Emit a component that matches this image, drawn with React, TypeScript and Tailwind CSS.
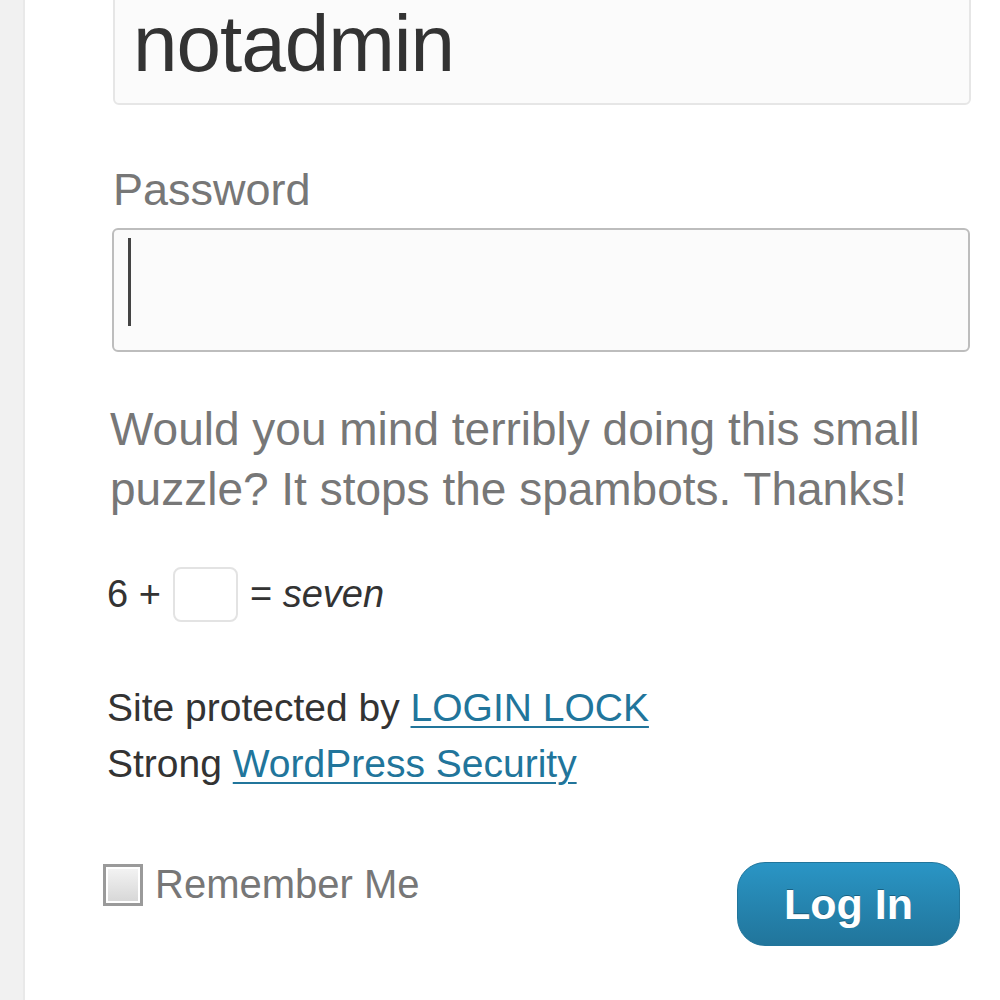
import React from 'react';

const font = { fontFamily: '"Liberation Sans", Arial, sans-serif' };

const App: React.FC = () => {
  return (
    <div className="flex w-[1000px] h-[1000px] overflow-hidden bg-white" style={font}>
      {/* left page edge */}
      <div className="w-[25px] h-full shrink-0 bg-[#f1f1f1] border-r-2 border-[#e9e9e9]" />

      <div className="flex-1 flex flex-col">
        {/* username field, top cut off */}
        <div className="ml-[88px] -mt-[20px] w-[858px] h-[125px] shrink-0 rounded-[6px] border-2 border-[#e6e6e6] bg-[#fbfbfb] pl-[18px] pt-[22px]">
          <span className="block text-[80px] leading-[80px] tracking-[-1px] text-[#333]">notadmin</span>
        </div>

        <label className="ml-[88px] mt-[62px] block text-[45px] leading-[45px] text-[#777]">Password</label>
        <div className="ml-[87px] mt-[16px] w-[858px] h-[124px] shrink-0 rounded-[6px] border-2 border-[#bdbdbd] bg-[#fbfbfb] pl-[14px] pt-[8px]">
          <div className="w-[3px] h-[88px] bg-[#444]" />
        </div>

        <p className="ml-[85px] mt-[47px] text-[46px] leading-[60px] text-[#777] whitespace-nowrap">
          Would you mind terribly doing this small
          <br />
          puzzle? It stops the spambots. Thanks!
        </p>

        <div className="ml-[82px] mt-[48px] flex items-center h-[55px] text-[38px] text-[#333] whitespace-nowrap">
          <span>6 +</span>
          <div className="ml-[12px] mr-[12px] w-[65px] h-[55px] rounded-[8px] border-2 border-[#e3e3e3] bg-white" />
          <span>= <em>seven</em></span>
        </div>

        <div className="ml-[82px] mt-[58px] text-[39px] leading-[56px] text-[#333] whitespace-nowrap">
          <div>
            Site protected by <a href="#" className="text-[#21759b] underline decoration-2 underline-offset-[5px]">LOGIN LOCK</a>
          </div>
          <div>
            Strong <a href="#" className="text-[#21759b] underline decoration-2 underline-offset-[5px]">WordPress Security</a>
          </div>
        </div>

        <div className="ml-[78px] mr-[40px] mt-[71px] flex items-start">
          <div className="flex items-start gap-[12px] pt-[1px]">
            <div className="w-[40px] h-[42px] border-[3px] border-[#9a9a9a] bg-gradient-to-b from-[#f4f4f4] to-[#d6d6d6] shadow-[inset_0_0_0_2px_#ffffff]" />
            <span className="text-[40px] leading-[40px] text-[#777]">Remember Me</span>
          </div>
          <button className="ml-auto -mt-[1px] w-[223px] h-[84px] rounded-[28px] bg-gradient-to-b from-[#2a95c5] to-[#21759b] text-white text-[43px] font-bold leading-none border border-[#21759b] [text-shadow:0_-1px_0_rgba(0,0,0,0.3)]">
            Log In
          </button>
        </div>
      </div>
    </div>
  );
};

export default App;
